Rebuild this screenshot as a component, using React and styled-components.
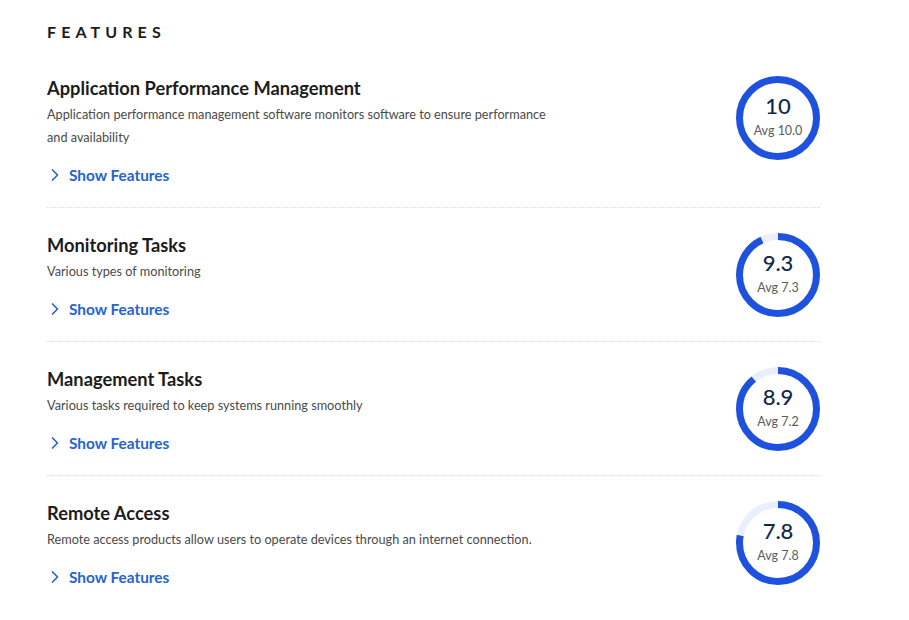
import React from "react";
import styled, { createGlobalStyle } from "styled-components";
import { ChevronRight } from "lucide-react";

const GlobalStyle = createGlobalStyle`
  body {
    margin: 0;
    background: #ffffff;
    font-family: Lato, "Noto Sans", sans-serif;
  }
`;

const Page = styled.div`
  width: 773px;
  padding: 22px 0 0 47px;
`;

const Heading = styled.h2`
  margin: 0 0 34px;
  font-size: 16px;
  line-height: 20px;
  font-weight: 700;
  letter-spacing: 5.1px;
  color: #1c1c1c;
`;

const Row = styled.div`
  display: flex;
  align-items: flex-start;
  justify-content: space-between;
  padding: ${(p) => (p.$first ? "0" : "25px")} 0 22px;
  border-bottom: ${(p) => (p.$last ? "none" : "1px dotted #d6d9de")};
`;

const Info = styled.div`
  display: flex;
  flex-direction: column;
  width: 520px;
`;

const Title = styled.div`
  font-size: 18.3px;
  line-height: 24px;
  font-weight: 700;
  color: #1c1c1c;
`;

const Desc = styled.div`
  margin-top: 3px;
  font-size: 12.7px;
  line-height: 23px;
  color: #4a4a4a;
`;

const ShowLink = styled.a`
  display: flex;
  align-items: center;
  gap: 4px;
  margin: 16px 0 0 -2px;
  font-size: 15.4px;
  line-height: 20px;
  font-weight: 700;
  color: #2563d6;
  cursor: pointer;
`;

const Ring = styled.div`
  position: relative;
  width: 84px;
  height: 84px;
  flex-shrink: 0;
`;

const RingText = styled.div`
  position: absolute;
  inset: 0;
  display: flex;
  flex-direction: column;
  align-items: center;
  justify-content: center;
  padding-bottom: 3px;
`;

const Score = styled.div`
  font-size: 22px;
  line-height: 24px;
  font-weight: 500;
  color: #0d2a4c;
`;

const Avg = styled.div`
  margin-top: 5px;
  font-size: 12.5px;
  line-height: 16px;
  color: #5b5b5b;
`;

const features = [
  {
    title: "Application Performance Management",
    desc: "Application performance management software monitors software to ensure performance and availability",
    score: "10",
    avg: "10.0",
  },
  { title: "Monitoring Tasks", desc: "Various types of monitoring", score: "9.3", avg: "7.3" },
  {
    title: "Management Tasks",
    desc: "Various tasks required to keep systems running smoothly",
    score: "8.9",
    avg: "7.2",
  },
  {
    title: "Remote Access",
    desc: "Remote access products allow users to operate devices through an internet connection.",
    score: "7.8",
    avg: "7.8",
  },
];

function ScoreRing({ score, avg }) {
  const r = 38.5;
  const c = 2 * Math.PI * r;
  const filled = (parseFloat(score) / 10) * c;
  return (
    <Ring>
      <svg width="84" height="84" viewBox="0 0 84 84">
        <circle cx="42" cy="42" r={r} fill="none" stroke="#e9f0fc" strokeWidth="7" />
        <circle
          cx="42"
          cy="42"
          r={r}
          fill="none"
          stroke="#1f51df"
          strokeWidth="7"
          strokeDasharray={`${filled} ${c}`}
          transform="rotate(-90 42 42)"
        />
      </svg>
      <RingText>
        <Score>{score}</Score>
        <Avg>Avg {avg}</Avg>
      </RingText>
    </Ring>
  );
}

export default function App() {
  return (
    <Page>
      <GlobalStyle />
      <Heading>FEATURES</Heading>
      {features.map((f, i) => (
        <Row key={f.title} $first={i === 0} $last={i === features.length - 1}>
          <Info>
            <Title>{f.title}</Title>
            <Desc>{f.desc}</Desc>
            <ShowLink>
              <ChevronRight size={20} strokeWidth={2} />
              Show Features
            </ShowLink>
          </Info>
          <ScoreRing score={f.score} avg={f.avg} />
        </Row>
      ))}
    </Page>
  );
}
